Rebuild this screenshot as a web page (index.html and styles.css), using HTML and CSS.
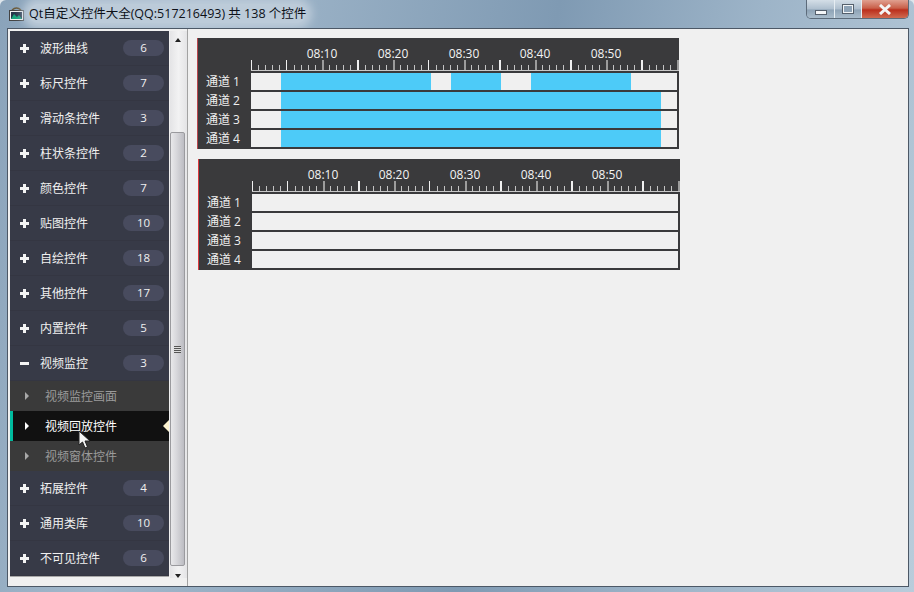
FILE: index.html
```html
<!DOCTYPE html>
<html lang="zh">
<head>
    <meta charset="UTF-8">
    <title>Qt自定义控件大全</title>
    <link rel="stylesheet" href="styles.css">
</head>
<body>
<div class="window">
    <div class="titlebar">
        <svg class="app-icon" width="15" height="15" viewBox="0 0 15 15">
            <path d="M3 3 Q7.500 -1 12 3" fill="none" stroke="#6b5a3a" stroke-width="1.500"/>
            <rect x="0.5" y="3.5" width="14" height="10" fill="#f2f2f2" stroke="#444"/>
            <rect x="2" y="5" width="11" height="7" fill="#26364a"/>
            <path d="M2 12 L5 7 L8 10 L10 8 L13 12 Z" fill="#17a57c"/>
        </svg>
        <div class="title">Qt自定义控件大全(QQ:517216493) 共 138 个控件</div>
        <div class="win-buttons">
            <div class="win-btn btn-min"><span class="min-glyph"></span></div>
            <div class="win-btn btn-max"><span class="max-glyph"></span></div>
            <div class="win-btn btn-close">
                <svg width="14" height="11" viewBox="0 0 14 11"><path d="M2 1 L12 10 M12 1 L2 10" stroke="#f4f4f4" stroke-width="3"/></svg>
            </div>
        </div>
    </div>

    <div class="client">
        <div class="nav-pane">
            <div class="nav">
                <div class="nav-row"><span class="plus"></span><span class="nav-text">波形曲线</span><span class="badge">6</span></div>
                <div class="nav-row"><span class="plus"></span><span class="nav-text">标尺控件</span><span class="badge">7</span></div>
                <div class="nav-row"><span class="plus"></span><span class="nav-text">滑动条控件</span><span class="badge">3</span></div>
                <div class="nav-row"><span class="plus"></span><span class="nav-text">柱状条控件</span><span class="badge">2</span></div>
                <div class="nav-row"><span class="plus"></span><span class="nav-text">颜色控件</span><span class="badge">7</span></div>
                <div class="nav-row"><span class="plus"></span><span class="nav-text">贴图控件</span><span class="badge">10</span></div>
                <div class="nav-row"><span class="plus"></span><span class="nav-text">自绘控件</span><span class="badge">18</span></div>
                <div class="nav-row"><span class="plus"></span><span class="nav-text">其他控件</span><span class="badge">17</span></div>
                <div class="nav-row"><span class="plus"></span><span class="nav-text">内置控件</span><span class="badge">5</span></div>
                <div class="nav-row"><span class="plus minus"></span><span class="nav-text">视频监控</span><span class="badge">3</span></div>
                <div class="nav-child"><span class="tri"></span>视频监控画面</div>
                <div class="nav-child selected"><span class="tri"></span>视频回放控件<span class="sel-arrow"></span></div>
                <div class="nav-child"><span class="tri"></span>视频窗体控件</div>
                <div class="nav-row"><span class="plus"></span><span class="nav-text">拓展控件</span><span class="badge">4</span></div>
                <div class="nav-row"><span class="plus"></span><span class="nav-text">通用类库</span><span class="badge">10</span></div>
                <div class="nav-row"><span class="plus"></span><span class="nav-text">不可见控件</span><span class="badge">6</span></div>
            </div>
            <div class="scrollbar">
                <div class="arrow-up"></div>
                <div class="thumb"><span class="grip"></span></div>
                <div class="arrow-down"></div>
            </div>
            <svg class="cursor" width="14" height="19" viewBox="0 0 14 19">
                <path d="M1 1 L1 15 L4.500 12 L7 18 L9.500 17 L7 11 L12 11 Z" fill="#f4f4f4" stroke="#222" stroke-width="1"/>
            </svg>
        </div>

        <div class="main">
            <div class="timeline">
                <div class="ruler">
                    <div class="ruler-labels"><span>08:10</span><span>08:20</span><span>08:30</span><span>08:40</span><span>08:50</span></div>
                    <div class="ticks"></div>
                </div>
                <div class="channel"><span class="ch-name">通道 1</span><div class="track">
                    <i style="width:30px"></i><b style="width:150px"></b><i style="width:20px"></i><b style="width:50px"></b><i style="width:30px"></i><b style="width:100px"></b>
                </div></div>
                <div class="channel"><span class="ch-name">通道 2</span><div class="track"><i style="width:30px"></i><b style="width:380px"></b></div></div>
                <div class="channel"><span class="ch-name">通道 3</span><div class="track"><i style="width:30px"></i><b style="width:380px"></b></div></div>
                <div class="channel"><span class="ch-name">通道 4</span><div class="track"><i style="width:30px"></i><b style="width:380px"></b></div></div>
            </div>

            <div class="timeline second">
                <div class="ruler">
                    <div class="ruler-labels"><span>08:10</span><span>08:20</span><span>08:30</span><span>08:40</span><span>08:50</span></div>
                    <div class="ticks"></div>
                </div>
                <div class="channel"><span class="ch-name">通道 1</span><div class="track"></div></div>
                <div class="channel"><span class="ch-name">通道 2</span><div class="track"></div></div>
                <div class="channel"><span class="ch-name">通道 3</span><div class="track"></div></div>
                <div class="channel"><span class="ch-name">通道 4</span><div class="track"></div></div>
            </div>
        </div>
    </div>
</div>
</body>
</html>
```

FILE: styles.css
```css
* {
    box-sizing: border-box;
}
html, body {
    margin: 0;
    height: 100%;
    overflow: hidden;
}
body {
    background: #dfe6ec;
    font-family: "Open Sans", "Noto Sans CJK SC", sans-serif;
    font-size: 12px;
}
.window {
    width: 914px;
    height: 592px;
    display: flex;
    flex-direction: column;
    padding: 0 5px 5px 7px;
    border-radius: 6px 6px 0 0;
    background: linear-gradient(100deg, #8aa3ba 0%, #a3b9cc 20%, #7f9ab3 55%, #9db4c8 75%, #b9ccdb 100%);
    position: relative;
}

/* title bar */
.titlebar {
    height: 28px;
    display: flex;
    align-items: flex-start;
    flex: none;
}
.app-icon {
    margin: 7px 0 0 2px;
    flex: none;
}
.title {
    margin: 4px 0 0 5px;
    padding: 2px 0;
    height: 19px;
    line-height: 15px;
    color: #0c1018;
    font-size: 12.500px;
    white-space: nowrap;
    background: #bccbd9;
    box-shadow: 0 0 8px 6px #bccbd9;
    border-radius: 9px;
}
.win-buttons {
    margin-left: auto;
    margin-right: 0;
    height: 19px;
    display: flex;
    border: 1px solid #5c6b7a;
    border-top: none;
    border-radius: 0 0 5px 5px;
    overflow: hidden;
}
.win-btn {
    display: flex;
    align-items: center;
    justify-content: center;
}
.btn-min, .btn-max {
    background: linear-gradient(#d4dee7, #aebfce 50%, #8ea3b6 55%, #a9bccb);
    border-right: 1px solid #e6edf2;
}
.btn-min {
    width: 28px;
}
.btn-max {
    width: 27px;
}
.btn-close {
    width: 46px;
    background: linear-gradient(#e0a090, #c9604a 45%, #bb2f1d 55%, #d06a50);
}
.min-glyph {
    width: 12px;
    height: 5px;
    margin-top: 6px;
    background: #f4f6f8;
    border: 1px solid #55606c;
}
.max-glyph {
    width: 12px;
    height: 10px;
    border: 2px solid #f2f5f7;
    outline: 1px solid #55606c;
    outline-offset: -1px;
    background: #8ea3b6;
}

/* client area */
.client {
    flex: 1;
    min-height: 0;
    display: flex;
    background: #f0f0f0;
    border: 1px solid #4c5866;
}
.nav-pane {
    width: 180px;
    flex: none;
    padding: 2px 0 0 2px;
    display: flex;
    align-items: flex-start;
    border-right: 1px solid #a2a2a2;
    position: relative;
}
.nav {
    width: 159px;
    flex: none;
    background: #373a47;
    border-bottom: 1px solid #a8a8a8;
}
.nav-row {
    height: 35px;
    display: flex;
    align-items: center;
    color: #f0f0f0;
    border-bottom: 1px solid #343642;
}
.plus {
    width: 9px;
    height: 9px;
    margin-left: 10px;
    flex: none;
    background:
        linear-gradient(#f4f4f4, #f4f4f4) center / 9px 3px no-repeat,
        linear-gradient(#f4f4f4, #f4f4f4) center / 3px 9px no-repeat;
}
.minus {
    background: linear-gradient(#f4f4f4, #f4f4f4) center / 9px 3px no-repeat;
}
.nav-text {
    margin-left: 11px;
}
.badge {
    width: 41px;
    height: 16px;
    margin-left: auto;
    margin-right: 5px;
    border-radius: 8px;
    background: #484b5e;
    text-align: center;
    line-height: 16px;
    font-size: 11.500px;
}
.nav-child {
    height: 30px;
    display: flex;
    align-items: center;
    padding-left: 15px;
    background: #3a3a3a;
    color: #9a9a9a;
    position: relative;
}
.tri {
    width: 0;
    height: 0;
    margin-right: 16px;
    border-left: 4px solid #a8a8a8;
    border-top: 4px solid transparent;
    border-bottom: 4px solid transparent;
}
.selected {
    background: #111;
    color: #fff;
    border-left: 3px solid #00bb9e;
    padding-left: 12px;
}
.selected .tri {
    border-left-color: #fff;
}
.sel-arrow {
    position: absolute;
    right: 0;
    top: 9px;
    width: 0;
    height: 0;
    border-right: 6px solid #fdf3d0;
    border-top: 6px solid transparent;
    border-bottom: 6px solid transparent;
}
.cursor {
    position: absolute;
    left: 70px;
    top: 401px;
}

/* scrollbar */
.scrollbar {
    width: 17px;
    height: 547px;
    margin-left: 1px;
    flex: none;
    padding-top: 101px;
    position: relative;
    background: linear-gradient(90deg, #e4e4e6, #f2f2f3 50%, #e4e4e6);
}
.arrow-up, .arrow-down {
    position: absolute;
    left: 5px;
    width: 0;
    height: 0;
    border-left: 3.500px solid transparent;
    border-right: 3.500px solid transparent;
}
.arrow-up {
    top: 7px;
    border-bottom: 4px solid #222;
}
.arrow-down {
    bottom: 0;
    border-top: 4px solid #222;
}
.thumb {
    width: 15px;
    height: 434px;
    display: flex;
    align-items: center;
    justify-content: center;
    background: linear-gradient(90deg, #e8e8ea, #d8d8dc 40%, #bcbcc2);
    border: 1px solid #9a9a9e;
    border-radius: 2px;
}
.grip {
    width: 7px;
    height: 7px;
    background: repeating-linear-gradient(#555 0 1px, #ddd 1px 2px);
}

/* timelines */
.main {
    flex: 1;
    padding: 9px 0 0 9px;
}
.timeline {
    width: 482px;
    height: 111px;
    background: #3a3a3c;
    border-left: 1px solid #b8474d;
}
.second {
    margin-top: 10px;
    margin-left: 1px;
    border-left-color: #dc3a3e;
}
.ruler {
    height: 35px;
    margin-left: 53px;
    padding-top: 7px;
}
.ruler-labels {
    height: 15px;
    padding-left: 35.500px;
    display: flex;
    color: #f4f4f4;
    line-height: 17px;
}
.ruler-labels span {
    width: 71px;
    text-align: center;
}
.ticks {
    height: 11px;
    border-bottom: 1px solid #c8c8c8;
    background:
        repeating-linear-gradient(90deg, #9c9c9c 0 2px, transparent 2px 71px) 71px 0 / 100% 100% no-repeat,
        repeating-linear-gradient(90deg, #f0f0f0 0 1px, transparent 1px 35.500px) 0 0 / 100% 100% no-repeat,
        repeating-linear-gradient(90deg, #c4c4c4 0 1px, transparent 1px 7.100px) 0 5px / 100% 5px no-repeat;
}
.channel {
    height: 17px;
    margin-bottom: 2px;
    display: flex;
    color: #f0f0f0;
}
.ch-name {
    width: 53px;
    flex: none;
    padding-left: 8px;
    line-height: 17px;
    white-space: nowrap;
}
.track {
    width: 426px;
    height: 17px;
    flex: none;
    display: flex;
    background: #f0f0f0;
}
.track b {
    background: #4dcbf8;
}
```
